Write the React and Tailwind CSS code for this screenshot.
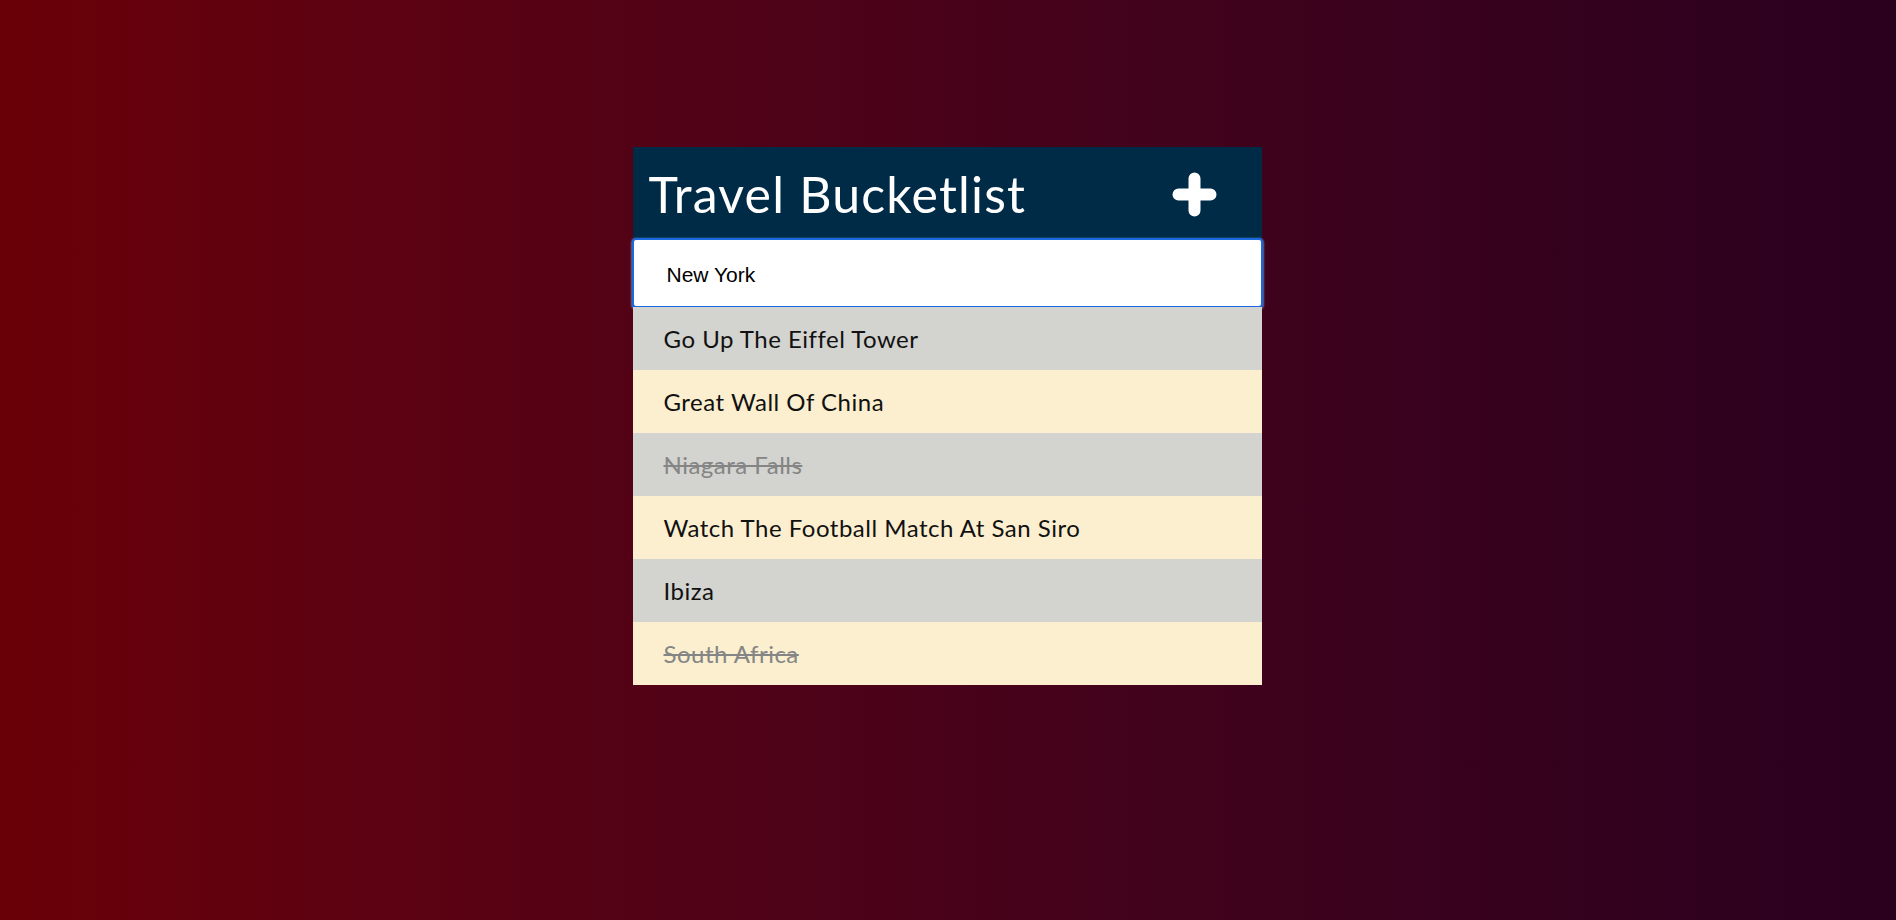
import React from "react";

const items = [
  { text: "Go Up The Eiffel Tower", done: false },
  { text: "Great Wall Of China", done: false },
  { text: "Niagara Falls", done: true },
  { text: "Watch The Football Match At San Siro", done: false },
  { text: "Ibiza", done: false },
  { text: "South Africa", done: true },
];

export default function App() {
  return (
    <div
      className="w-full h-[920px] flex justify-center pr-[2px] bg-gradient-to-r from-[#6a0007] to-[#2a001f]"
      style={{ fontFamily: "Lato, 'Open Sans', sans-serif" }}
    >
      <div className="w-[629px] mt-[147px] self-start">
        <div className="h-[91px] bg-[#002b46] flex items-center justify-between pl-[16px] pr-[45px]">
          <h1 className="text-white text-[50px] tracking-[1.2px] leading-none font-normal pt-[2px]">Travel Bucketlist</h1>
          <svg width="45" height="45" viewBox="0 0 45 45" className="mt-[3px]">
            <path d="M22.5 6.5 V38.5 M6.5 22.5 H38.5" stroke="white" strokeWidth="12" strokeLinecap="round" />
          </svg>
        </div>
        <div className="h-[70px] -mx-px bg-white border-2 border-[#1b69e0] rounded-[4px] shadow-[0_1px_2px_1px_rgba(120,170,230,0.6)] flex items-center pl-[33px] pt-[4px]">
          <span
            className="text-[21px] text-black"
            style={{ fontFamily: "'Liberation Sans', Arial, sans-serif" }}
          >
            New York
          </span>
        </div>
        <ul className="-mt-[1px]">
          {items.map((it, i) => (
            <li
              key={i}
              className={`h-[63px] flex items-center pl-[31px] text-[24px] tracking-[0.5px] ${
                i % 2 === 0 ? "bg-[#d3d3cf]" : "bg-[#fbefcf]"
              } ${it.done ? "line-through text-[#858585]" : "text-[#111111]"}`}
            >
              {it.text}
            </li>
          ))}
        </ul>
      </div>
    </div>
  );
}
